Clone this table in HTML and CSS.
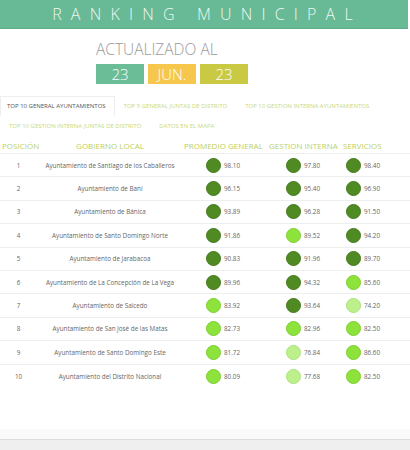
FILE: index.html
```html
<!DOCTYPE html>
<html lang="es">
<head>
  <meta charset="UTF-8">
  <meta name="viewport" content="width=device-width, initial-scale=1.0">
  <title>Ranking Municipal</title>
  <link rel="stylesheet" href="styles.css">
</head>
<body>
  <div class="banner">
    <h1>RANKING MUNICIPAL</h1>
  </div>

  <div class="updated">
    <h2>ACTUALIZADO AL</h2>
    <div class="date">
      <span class="date-box day">23</span>
      <span class="date-box month">JUN.</span>
      <span class="date-box year">23</span>
    </div>
  </div>

  <ul class="tabs">
    <li class="tab active">TOP 10 GENERAL AYUNTAMIENTOS</li>
    <li class="tab">TOP 5 GENERAL JUNTAS DE DISTRITO</li>
    <li class="tab">TOP 10 GESTION INTERNA AYUNTAMIENTOS</li>
    <li class="tab">TOP 10 GESTION INTERNA JUNTAS DE DISTRITO</li>
    <li class="tab">DATOS EN EL MAPA</li>
  </ul>

  <div class="ranking" id="ranking">
    <div class="row head">
      <div class="pos">POSICIÓN</div>
      <div class="name">GOBIERNO LOCAL</div>
      <div class="score general">PROMEDIO GENERAL</div>
      <div class="score gestion">GESTION INTERNA</div>
      <div class="score servicios">SERVICIOS</div>
    </div>
  </div>

  <div class="footer"></div>

  <script>
    const ranking = [
      ['Ayuntamiento de Santiago de los Caballeros', 98.10, 97.80, 98.40],
      ['Ayuntamiento de Baní', 96.15, 95.40, 96.90],
      ['Ayuntamiento de Bánica', 93.89, 96.28, 91.50],
      ['Ayuntamiento de Santo Domingo Norte', 91.86, 89.52, 94.20],
      ['Ayuntamiento de Jarabacoa', 90.83, 91.96, 89.70],
      ['Ayuntamiento de La Concepción de La Vega', 89.96, 94.32, 85.60],
      ['Ayuntamiento de Salcedo', 83.92, 93.64, 74.20],
      ['Ayuntamiento de San José de las Matas', 82.73, 82.96, 82.50],
      ['Ayuntamiento de Santo Domingo Este', 81.72, 76.84, 86.60],
      ['Ayuntamiento del Distrito Nacional', 80.09, 77.68, 82.50]
    ];

    function level(value) {
      if (value >= 89.6) return 'high';
      if (value >= 80) return 'mid';
      return 'low';
    }

    function cell(value, cls) {
      return `<div class="score ${cls}"><span class="dot ${level(value)}"></span>${value.toFixed(2)}</div>`;
    }

    const table = document.getElementById('ranking');
    ranking.forEach((item, index) => {
      const row = document.createElement('div');
      row.className = 'row';
      row.innerHTML = `<div class="pos">${index + 1}</div>
        <div class="name">${item[0]}</div>
        ${cell(item[1], 'general')}
        ${cell(item[2], 'gestion')}
        ${cell(item[3], 'servicios')}`;
      table.appendChild(row);
    });
  </script>
</body>
</html>
```

FILE: styles.css
```css
body {
  font-family: "Open Sans", "Liberation Sans", sans-serif;
  background-color: #ffffff;
  color: #666;
  margin: 0;
  padding: 0;
  width: 410px;
  min-height: 450px;
  display: flex;
  flex-direction: column;
}

.banner {
  background-color: #68b995;
  width: 408px;
  height: 28px;
  border-bottom: 1px solid #5eae8a;
  display: flex;
  align-items: center;
  justify-content: center;
}

.banner h1 {
  margin: 0 0 0 6px;
  color: #eef8f2;
  font-size: 16px;
  font-weight: 300;
  letter-spacing: 9.2px;
  line-height: 20px;
}

.updated {
  margin-left: 96px;
}

.updated h2 {
  margin: 10px 0 5px;
  font-size: 15.5px;
  font-weight: 300;
  line-height: 20px;
  color: #9a9a9a;
}

.date {
  display: flex;
  gap: 4px;
}

.date-box {
  width: 48px;
  height: 20px;
  line-height: 20px;
  text-align: center;
  color: #ffffff;
  font-size: 15px;
  font-weight: 300;
}

.day {
  background-color: #6abd97;
}

.month {
  background-color: #f6c74c;
}

.year {
  background-color: #c9c943;
}

.tabs {
  list-style: none;
  margin: 12px 0 0;
  padding: 0;
  display: flex;
  flex-wrap: wrap;
}

.tab {
  font-size: 6px;
  line-height: 9px;
  padding: 5px 8px;
  color: #c8d97c;
  border: 1px solid transparent;
  border-bottom: none;
}

.tab.active {
  color: #555;
  border-color: #eeeeee;
  padding-left: 6px;
}

.ranking {
  margin-top: 2px;
}

.row {
  display: grid;
  grid-template-columns: 37px 146px 85px 70px 72px;
  align-items: center;
  height: 23.4px;
  border-bottom: 1px solid #eeeeee;
  box-sizing: border-box;
  font-size: 6.3px;
  color: #666;
}

.row:last-child {
  border-bottom: none;
}

.row .pos,
.row .name {
  text-align: center;
}

.row.head {
  height: 16px;
  font-size: 8px;
  color: #bccf62;
}

.row.head .pos {
  text-align: left;
  padding-left: 2px;
}

.row.head .score {
  padding-left: 1px;
}

.row.head .servicios {
  padding-left: 5px;
}

.score {
  display: flex;
  align-items: center;
}

.row .general {
  padding-left: 23px;
}

.row .gestion {
  padding-left: 18px;
}

.row .servicios {
  padding-left: 8px;
}

.dot {
  width: 13px;
  height: 13px;
  border-radius: 50%;
  margin-right: 3px;
  flex-shrink: 0;
}

.dot.high {
  background-color: #4f8a23;
  border: 1px solid #457a1d;
}

.dot.mid {
  background-color: #8ee23c;
  border: 1px solid #7ecf31;
}

.dot.low {
  background-color: #bdf08c;
  border: 1px solid #abe27a;
}

.footer {
  margin-top: auto;
  height: 10px;
  background-color: #efefef;
  border-top: 1px solid #dddddd;
  box-shadow: 0 -10px 0 #fafafa;
}
```
